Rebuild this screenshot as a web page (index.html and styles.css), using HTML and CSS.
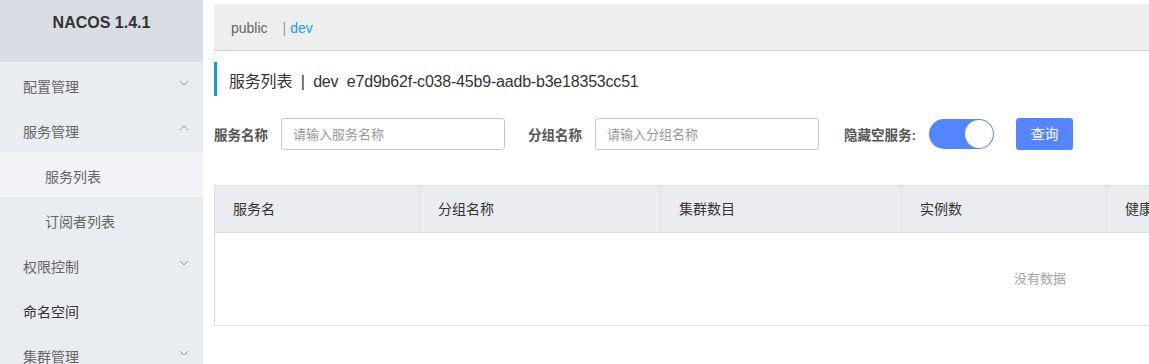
FILE: index.html
```html
<!DOCTYPE html>
<html lang="zh-CN">

<head>
    <meta charset="UTF-8">
    <title>NACOS 服务列表</title>
    <link rel="stylesheet" href="styles.css">
</head>

<body>
    <div class="page">
        <div class="side">
            <h1 class="logo">NACOS 1.4.1</h1>
            <ul class="menu">
                <li class="item">配置管理<svg class="arrow" viewBox="0 0 10 6"><path d="M1 1l4 4 4-4" /></svg></li>
                <li class="item">服务管理<svg class="arrow" viewBox="0 0 10 6"><path d="M1 5l4-4 4 4" /></svg></li>
                <li class="item sub active">服务列表</li>
                <li class="item sub">订阅者列表</li>
                <li class="item">权限控制<svg class="arrow" viewBox="0 0 10 6"><path d="M1 1l4 4 4-4" /></svg></li>
                <li class="item dark">命名空间</li>
                <li class="item">集群管理<svg class="arrow" viewBox="0 0 10 6"><path d="M1 1l4 4 4-4" /></svg></li>
            </ul>
        </div>
        <div class="main">
            <div class="nsbar">
                <span class="ns">public</span>
                <span class="sep">|</span>
                <span class="ns cur">dev</span>
            </div>
            <h2 class="title">服务列表 &nbsp;|&nbsp; dev &nbsp;e7d9b62f-c038-45b9-aadb-b3e18353cc51</h2>
            <div class="search">
                <label class="lab">服务名称</label>
                <input class="ipt" type="text" placeholder="请输入服务名称">
                <label class="lab">分组名称</label>
                <input class="ipt" type="text" placeholder="请输入分组名称">
                <label class="lab last">隐藏空服务:</label>
                <span class="switch"><em></em></span>
                <a href="javascript:void(0);" class="btn">查询</a>
            </div>
            <div class="table">
                <div class="thead">
                    <div class="th w1">服务名</div>
                    <div class="th w2">分组名称</div>
                    <div class="th w2">集群数目</div>
                    <div class="th w1">实例数</div>
                    <div class="th">健康实例数</div>
                </div>
                <div class="empty">没有数据</div>
            </div>
        </div>
    </div>
</body>

</html>
```

FILE: styles.css
```css
* {
    margin: 0;
    padding: 0;
    box-sizing: border-box;
}

html,
body {
    height: 100%;
    overflow: hidden;
}

body {
    font-family: "Liberation Sans", "Noto Sans CJK SC", sans-serif;
    background: #fff;
    color: #333;
}

a {
    text-decoration: none;
}

ul {
    list-style: none;
}

.page {
    display: flex;
    align-items: flex-start;
    width: 1866px;
    min-height: 100%;
}

/* 左侧菜单 */
.side {
    width: 203px;
    flex-shrink: 0;
    min-height: 100vh;
    background: #e9ecf1;
}

.logo {
    height: 62px;
    background: #dadde4;
    text-align: center;
    font-size: 16px;
    font-weight: bold;
    line-height: 46px;
    color: #333;
}

.menu .item {
    height: 45px;
    display: flex;
    align-items: center;
    justify-content: space-between;
    padding: 2px 14px 0 23px;
    font-size: 14px;
    color: #666;
}

.menu .sub {
    padding-left: 45px;
}

.menu .active {
    background: #f2f3f7;
}

.menu .dark {
    color: #333;
}

.arrow {
    width: 10px;
    height: 6px;
    fill: none;
    stroke: #999;
    stroke-width: 1;
    margin-bottom: 5px;
}

/* 右侧内容 */
.main {
    flex: 1;
    padding: 4px 0 0 11px;
}

.nsbar {
    height: 47px;
    background: #eee;
    border-bottom: 1px solid #ccc;
    display: flex;
    align-items: center;
    padding: 2px 0 0 17px;
    font-size: 14px;
}

.ns {
    color: #666;
}

.sep {
    color: #999;
    margin: 0 4px 0 15px;
}

.cur {
    color: #1aa0d9;
}

.title {
    margin-top: 11px;
    height: 34px;
    border-left: 3px solid #0aa1d5;
    padding-left: 12px;
    font-size: 16px;
    font-weight: normal;
    line-height: 40px;
    color: #333;
    white-space: pre;
    letter-spacing: -0.2px;
}

.search {
    display: flex;
    align-items: center;
    margin-top: 22px;
    height: 32px;
}

.lab {
    font-size: 13.5px;
    font-weight: bold;
    color: #555;
    margin-right: 13px;
}

.lab.last {
    margin: 0 13px 0 2px;
}

.ipt {
    width: 224px;
    height: 32px;
    border: 1px solid #c4c6cf;
    border-radius: 3px;
    padding: 0 11px;
    font-family: inherit;
    font-size: 13px;
    color: #333;
    margin-right: 23px;
    outline: none;
}

.ipt::placeholder {
    color: #999;
}

.switch {
    position: relative;
    width: 65px;
    height: 30px;
    border-radius: 15px;
    background: #5584ff;
    margin-right: 22px;
}

.switch em {
    position: absolute;
    right: 1px;
    top: 1px;
    width: 28px;
    height: 28px;
    border-radius: 50%;
    background: #fff;
}

.btn {
    width: 57px;
    height: 32px;
    border-radius: 3px;
    background: #5584ff;
    color: #fff;
    font-size: 14px;
    line-height: 32px;
    text-align: center;
}

.table {
    margin-top: 35px;
    width: 1652px;
    border: 1px solid #dcdee3;
}

.thead {
    display: flex;
    height: 47px;
    background: #ebecf0;
    border-bottom: 1px solid #dcdee3;
}

.th {
    padding-left: 18px;
    font-size: 14px;
    line-height: 46px;
    color: #333;
    border-right: 1px solid #dcdee3;
}

.th.w1 {
    width: 205px;
}

.th.w2 {
    width: 241px;
}

.empty {
    height: 92px;
    text-align: center;
    line-height: 92px;
    font-size: 13px;
    color: #a0a2ad;
}
```
